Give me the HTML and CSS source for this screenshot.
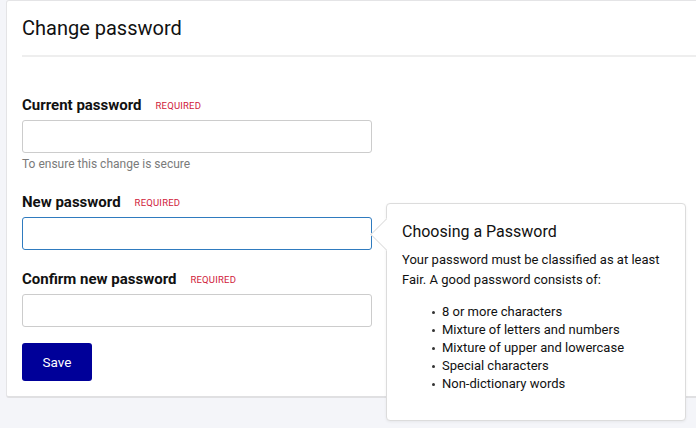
FILE: index.html
```html
<!DOCTYPE html>
<html>
<head>
<meta charset="utf-8">
<link rel="stylesheet" href="styles.css">
</head>
<body>
<div class="page">
  <div class="card">
    <div class="card-header">
      <h1 class="title">Change password</h1>
    </div>
    <form class="form">
      <div class="field">
        <label class="label">Current password <span class="req">REQUIRED</span></label>
        <input class="input" type="password">
        <div class="help">To ensure this change is secure</div>
      </div>
      <div class="field field-new">
        <label class="label">New password <span class="req">REQUIRED</span></label>
        <input class="input input-focus" type="password">
      </div>
      <div class="field field-confirm">
        <label class="label">Confirm new password <span class="req">REQUIRED</span></label>
        <input class="input" type="password">
      </div>
      <button class="btn" type="button">Save</button>
    </form>
  </div>
  <div class="popover">
    <div class="arrow"></div>
    <h2 class="pop-title">Choosing a Password</h2>
    <p class="pop-text">Your password must be classified as at least Fair. A good password consists of:</p>
    <ul class="pop-list">
      <li>8 or more characters</li>
      <li>Mixture of letters and numbers</li>
      <li>Mixture of upper and lowercase</li>
      <li>Special characters</li>
      <li>Non-dictionary words</li>
    </ul>
  </div>
</div>
</body>
</html>
```

FILE: styles.css
```css
html, body {
  margin: 0;
  padding: 0;
  background: #f4f5f9;
  font-family: Roboto, "Liberation Sans", sans-serif;
  color: #111;
  overflow: hidden;
}
.page {
  position: relative;
  width: 696px;
  height: 428px;
  padding-left: 6px;
  box-sizing: border-box;
}
.card {
  width: 720px;
  box-sizing: border-box;
  background: #fff;
  border: 1px solid #e4e4e6;
  border-bottom: 2px solid #e0e0e2;
  border-radius: 3px;
  padding: 0 0 15px 15px;
}
.card-header {
  padding-top: 14px;
  border-bottom: 2px solid #eeeeee;
  height: 56px;
  box-sizing: border-box;
}
.title {
  margin: 0;
  font-size: 20px;
  font-weight: 400;
  line-height: 26px;
  color: #111;
}
.form {
  padding-top: 37px;
}
.field {
  display: flex;
  flex-direction: column;
}
.label {
  font-size: 15px;
  font-weight: 700;
  line-height: 20px;
  margin-bottom: 4px;
  display: flex;
  align-items: center;
  gap: 14px;
  color: #111;
}
.field-first .label {
  margin-bottom: 3px;
}
.req {
  font-size: 9.5px;
  font-weight: 400;
  color: #d0193a;
  letter-spacing: 0.2px;
  padding-top: 2px;
}
.input {
  width: 350px;
  height: 33px;
  box-sizing: border-box;
  border: 1px solid #cccccc;
  border-radius: 3px;
  background: #fff;
  margin: 0;
  outline: none;
}
.input-focus {
  border-color: #2f7bbf;
}
.help {
  font-size: 12px;
  color: #7a7a7a;
  margin-top: 4px;
  line-height: 15px;
}
.field-new {
  margin-top: 19px;
}
.field-confirm {
  margin-top: 18px;
}
.btn {
  margin-top: 16px;
  width: 70px;
  height: 38px;
  background: #000099;
  color: #fff;
  border: none;
  border-radius: 3px;
  font-family: Roboto, "Liberation Sans", sans-serif;
  font-size: 13.5px;
  padding: 0;
}
.popover {
  position: absolute;
  left: 386px;
  top: 203px;
  width: 300px;
  height: 218px;
  box-sizing: border-box;
  background: #fff;
  border: 1px solid #dcdcdc;
  border-radius: 4px;
  padding: 17px 15px 0 15px;
  box-shadow: 0 1px 3px rgba(0,0,0,0.06);
}
.arrow {
  position: absolute;
  left: -12px;
  top: 19px;
  width: 22px;
  height: 22px;
  background: #fff;
  border-left: 1px solid #e0e0e0;
  border-bottom: 1px solid #e0e0e0;
  transform: rotate(45deg);
}
.pop-title {
  margin: 0;
  font-size: 16px;
  font-weight: 400;
  line-height: 22px;
  color: #111;
}
.pop-text {
  margin: 7px 0 0 0;
  font-size: 13px;
  line-height: 20px;
  color: #111;
}
.pop-list {
  margin: 13px 0 0 0;
  padding-left: 40px;
  font-size: 13px;
  line-height: 18px;
  list-style: none;
}
.pop-list li {
  position: relative;
}
.pop-list li::before {
  content: "";
  position: absolute;
  left: -10px;
  top: 8px;
  width: 3px;
  height: 3px;
  border-radius: 50%;
  background: #333;
}
```
